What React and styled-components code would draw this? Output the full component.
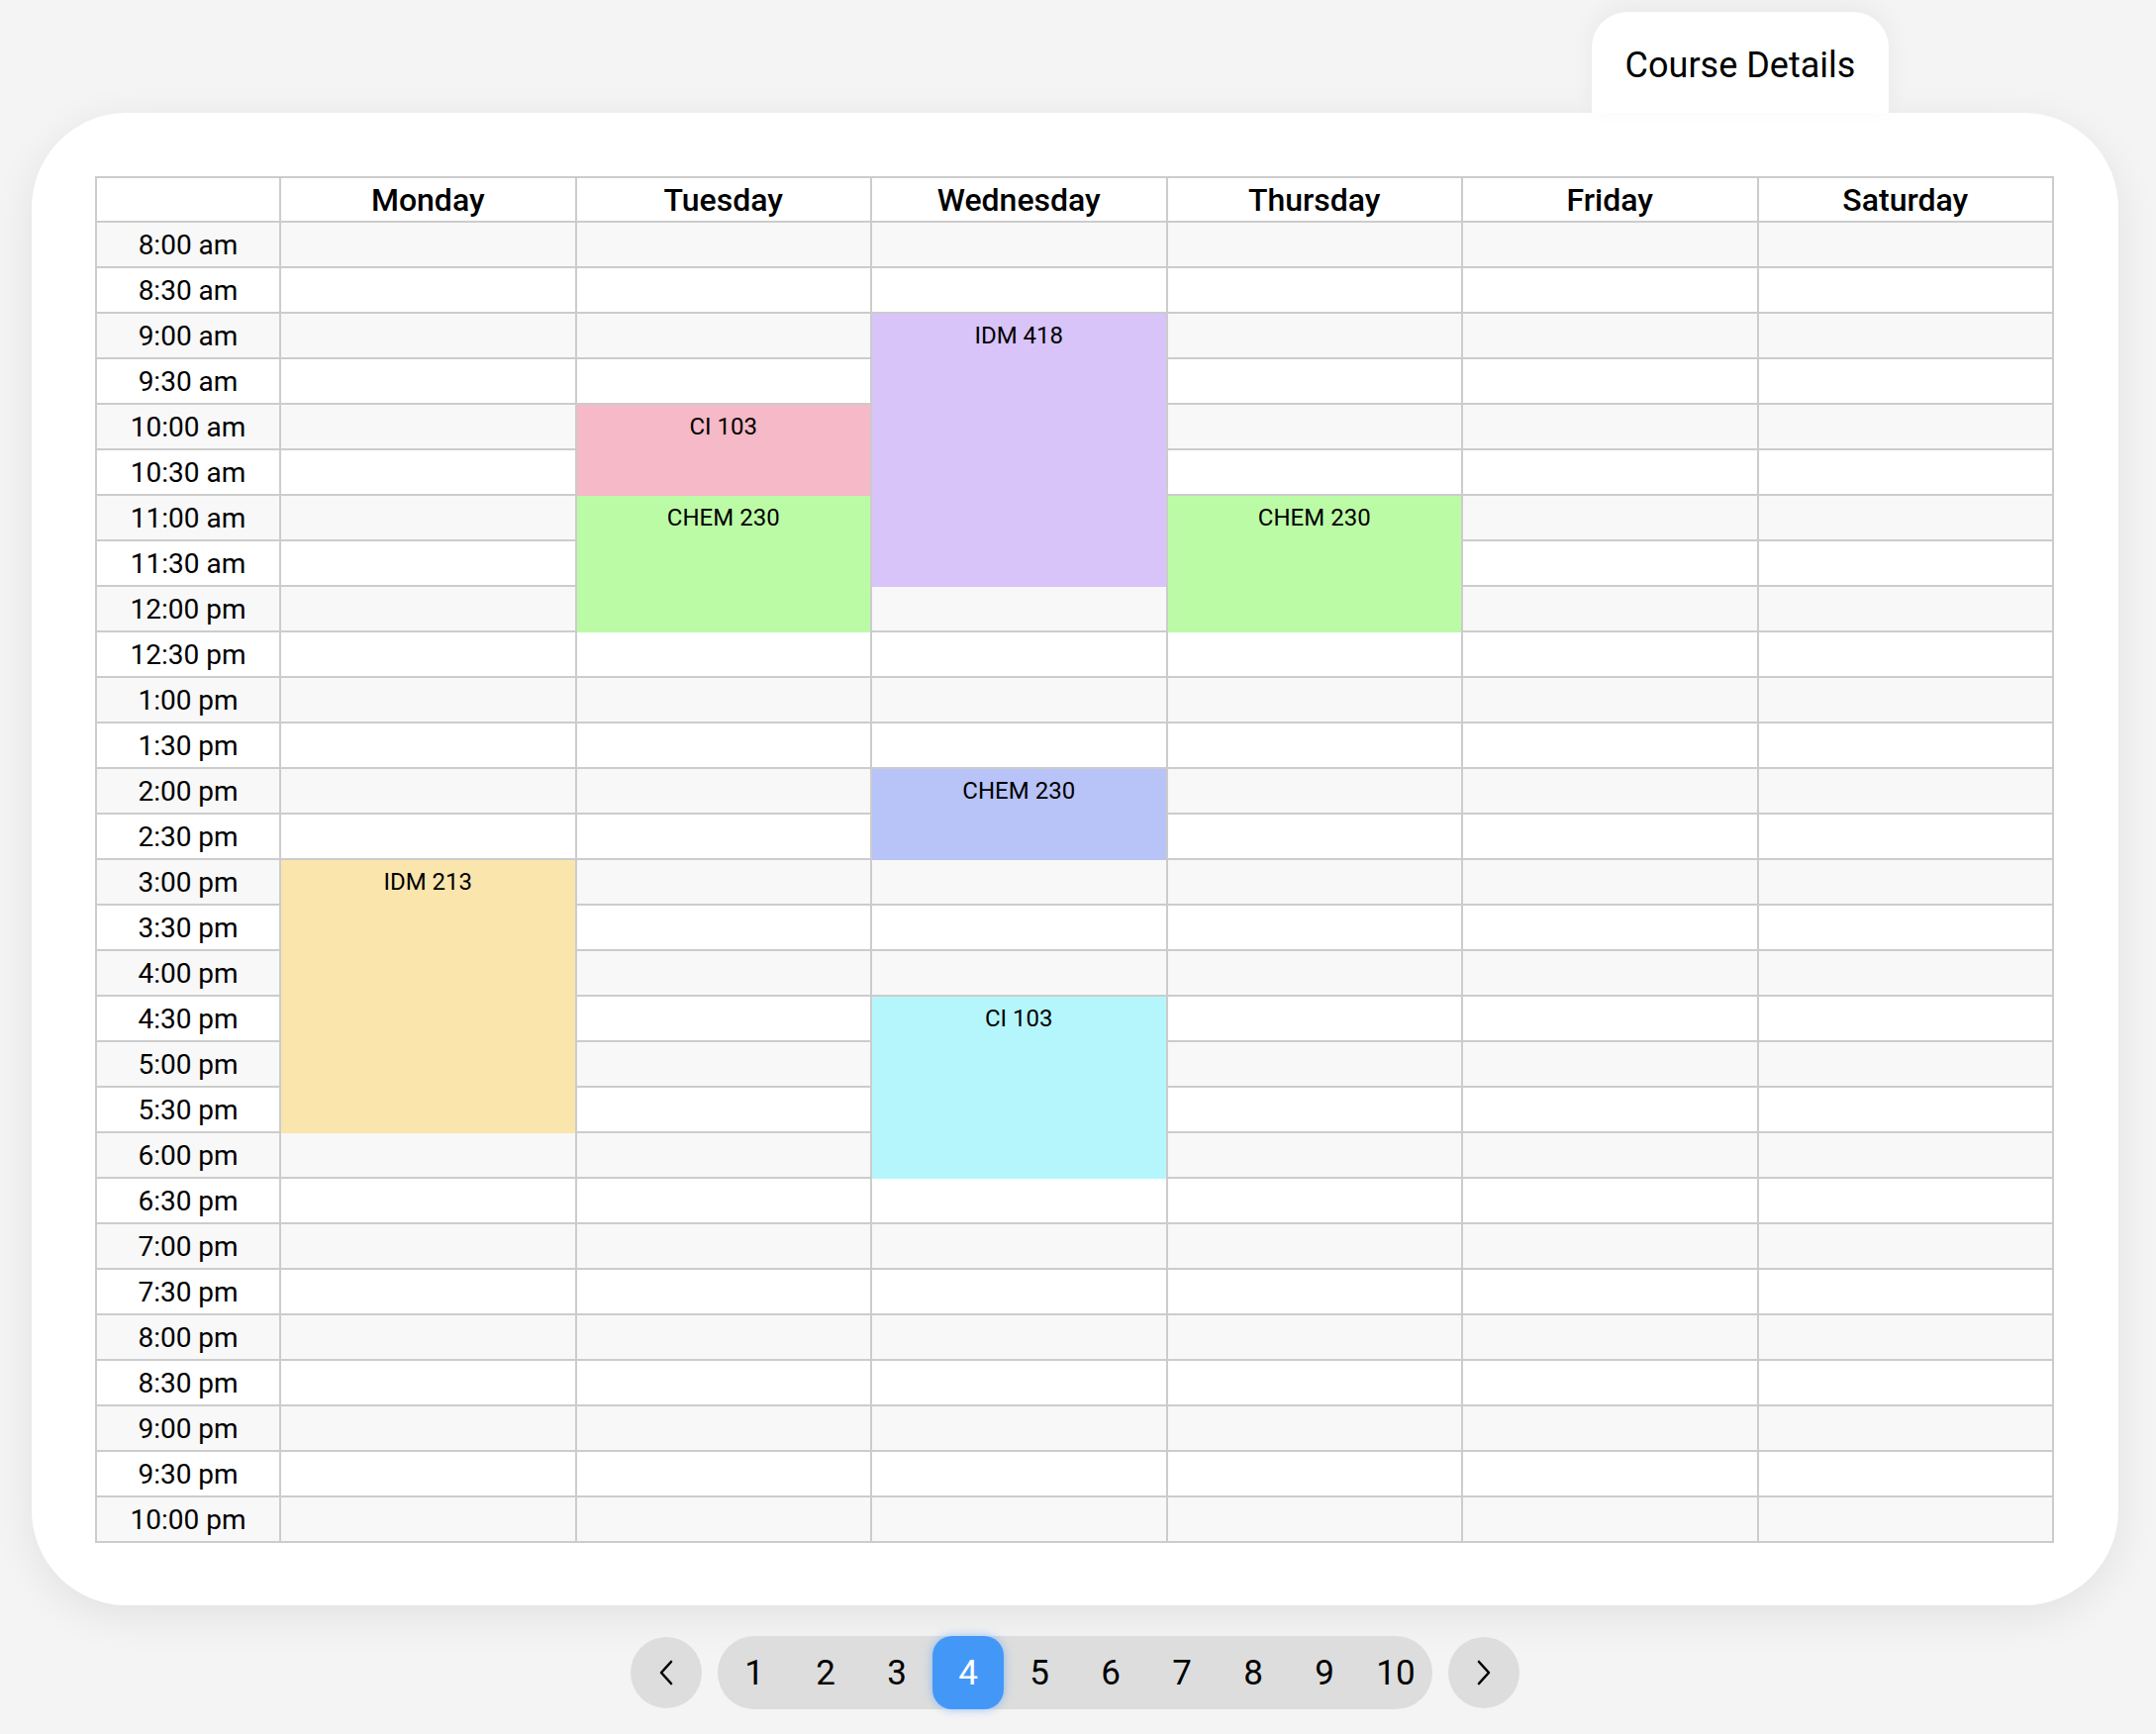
import React from 'react'
import styled, { createGlobalStyle } from 'styled-components'

const GlobalStyle = createGlobalStyle`
  body {
    margin: 0;
    background-color: #f4f4f4;
    font-family: Roboto, 'Liberation Sans', sans-serif;
    color: #000000;
  }
  * {
    box-sizing: border-box;
  }
`

const Page = styled.div`
  width: 2108px;
  margin-left: 32px;
  padding-top: 12px;
  padding-bottom: 24px;
`

const TabRow = styled.div`
  display: flex;
  justify-content: flex-end;
  padding-right: 232px;
`

const Tab = styled.div`
  position: relative;
  z-index: 1;
  width: 300px;
  height: 102px;
  padding-top: 33px;
  background-color: #ffffff;
  border-radius: 36px 36px 0 0;
  box-shadow: 0 -6px 24px rgba(0, 0, 0, 0.05);
  font-size: 36px;
  line-height: 42px;
  text-align: center;
`

const Card = styled.div`
  background-color: #ffffff;
  border-radius: 96px;
  padding: 64px 65px 63px 64px;
  box-shadow: 0 10px 44px rgba(0, 0, 0, 0.08);
`

const Table = styled.div`
  display: grid;
  grid-template-columns: 186px repeat(6, 1fr);
  grid-template-rows: 45px;
  grid-auto-rows: 46px;
  border-top: 2px solid #cccccc;
  border-left: 2px solid #cccccc;
`

const HeadCell = styled.div`
  display: flex;
  align-items: center;
  justify-content: center;
  background-color: #ffffff;
  border-right: 2px solid #cccccc;
  border-bottom: 2px solid #cccccc;
  font-size: 32px;
  font-weight: 500;
`

const TimeCell = styled.div`
  display: flex;
  align-items: center;
  justify-content: center;
  background-color: ${p => (p.$striped ? '#f8f8f8' : '#ffffff')};
  border-right: 2px solid #cccccc;
  border-bottom: 2px solid #cccccc;
  font-size: 28px;
`

const Cell = styled.div`
  background-color: ${p => (p.$striped ? '#f8f8f8' : '#ffffff')};
  border-right: 2px solid #cccccc;
  border-bottom: 2px solid #cccccc;
`

const Course = styled.div`
  grid-row: span ${p => p.$span};
  background-color: ${p => p.$color};
  border-right: 2px solid #cccccc;
  padding-top: 8px;
  font-size: 24px;
  line-height: 28px;
  text-align: center;
`

const Pager = styled.div`
  display: flex;
  align-items: center;
  justify-content: center;
  gap: 16px;
  margin-top: 31px;
`

const ArrowButton = styled.button`
  width: 72px;
  height: 72px;
  border: none;
  border-radius: 50%;
  background-color: #dddddd;
  display: flex;
  align-items: center;
  justify-content: center;
  padding: 0;
  cursor: pointer;
`

const PageGroup = styled.div`
  display: flex;
  height: 74px;
  padding: 0 1px;
  border-radius: 37px;
  background-color: #dddddd;
`

const PageButton = styled.button`
  width: 72px;
  height: 74px;
  border: none;
  padding: 0;
  border-radius: 20px;
  background-color: ${p => (p.$active ? '#4398f7' : 'transparent')};
  color: ${p => (p.$active ? '#ffffff' : '#000000')};
  box-shadow: ${p => (p.$active ? '0 0 10px rgba(67, 152, 247, 0.55)' : 'none')};
  font-family: Roboto, 'Liberation Sans', sans-serif;
  font-size: 35px;
  cursor: pointer;
`

const days = ['Monday', 'Tuesday', 'Wednesday', 'Thursday', 'Friday', 'Saturday']

const times = Array.from({ length: 29 }, (_, i) => {
  const mins = 8 * 60 + i * 30
  const h = Math.floor(mins / 60)
  const m = mins % 60
  const hour = h > 12 ? h - 12 : h
  return `${hour}:${m === 0 ? '00' : '30'} ${h >= 12 ? 'pm' : 'am'}`
})

// day index, start row, number of half hour rows
const courses = [
  { day: 0, start: 14, span: 6, name: 'IDM 213', color: '#fae5ad' },
  { day: 1, start: 4, span: 2, name: 'CI 103', color: '#f5b9c7' },
  { day: 1, start: 6, span: 3, name: 'CHEM 230', color: '#bcfba6' },
  { day: 2, start: 2, span: 6, name: 'IDM 418', color: '#d8c4f8' },
  { day: 2, start: 12, span: 2, name: 'CHEM 230', color: '#b8c3f7' },
  { day: 2, start: 17, span: 4, name: 'CI 103', color: '#b5f6fc' },
  { day: 3, start: 6, span: 3, name: 'CHEM 230', color: '#bcfba6' },
]

const Chevron = ({ dir }) => (
  <svg width="16" height="26" viewBox="0 0 16 26" fill="none">
    <polyline
      points={dir === 'left' ? '13,2 3,13 13,24' : '3,2 13,13 3,24'}
      stroke="#000000"
      strokeWidth="2.6"
      strokeLinecap="round"
      strokeLinejoin="round"
    />
  </svg>
)

function renderRows() {
  const out = []
  times.forEach((t, row) => {
    const striped = row % 2 === 0
    out.push(<TimeCell key={`t${row}`} $striped={striped}>{t}</TimeCell>)
    days.forEach((_, day) => {
      const course = courses.find(c => c.day === day && c.start === row)
      if (course) {
        out.push(
          <Course key={`c${row}-${day}`} $span={course.span} $color={course.color}>
            {course.name}
          </Course>
        )
        return
      }
      const covered = courses.some(c => c.day === day && row > c.start && row < c.start + c.span)
      if (!covered) out.push(<Cell key={`e${row}-${day}`} $striped={striped} />)
    })
  })
  return out
}

export default function App() {
  return (
    <>
      <GlobalStyle />
      <Page>
        <TabRow>
          <Tab>Course Details</Tab>
        </TabRow>
        <Card>
          <Table>
            <HeadCell />
            {days.map(d => (
              <HeadCell key={d}>{d}</HeadCell>
            ))}
            {renderRows()}
          </Table>
        </Card>
        <Pager>
          <ArrowButton aria-label="Previous page">
            <Chevron dir="left" />
          </ArrowButton>
          <PageGroup>
            {[1, 2, 3, 4, 5, 6, 7, 8, 9, 10].map(n => (
              <PageButton key={n} $active={n === 4}>{n}</PageButton>
            ))}
          </PageGroup>
          <ArrowButton aria-label="Next page">
            <Chevron dir="right" />
          </ArrowButton>
        </Pager>
      </Page>
    </>
  )
}
